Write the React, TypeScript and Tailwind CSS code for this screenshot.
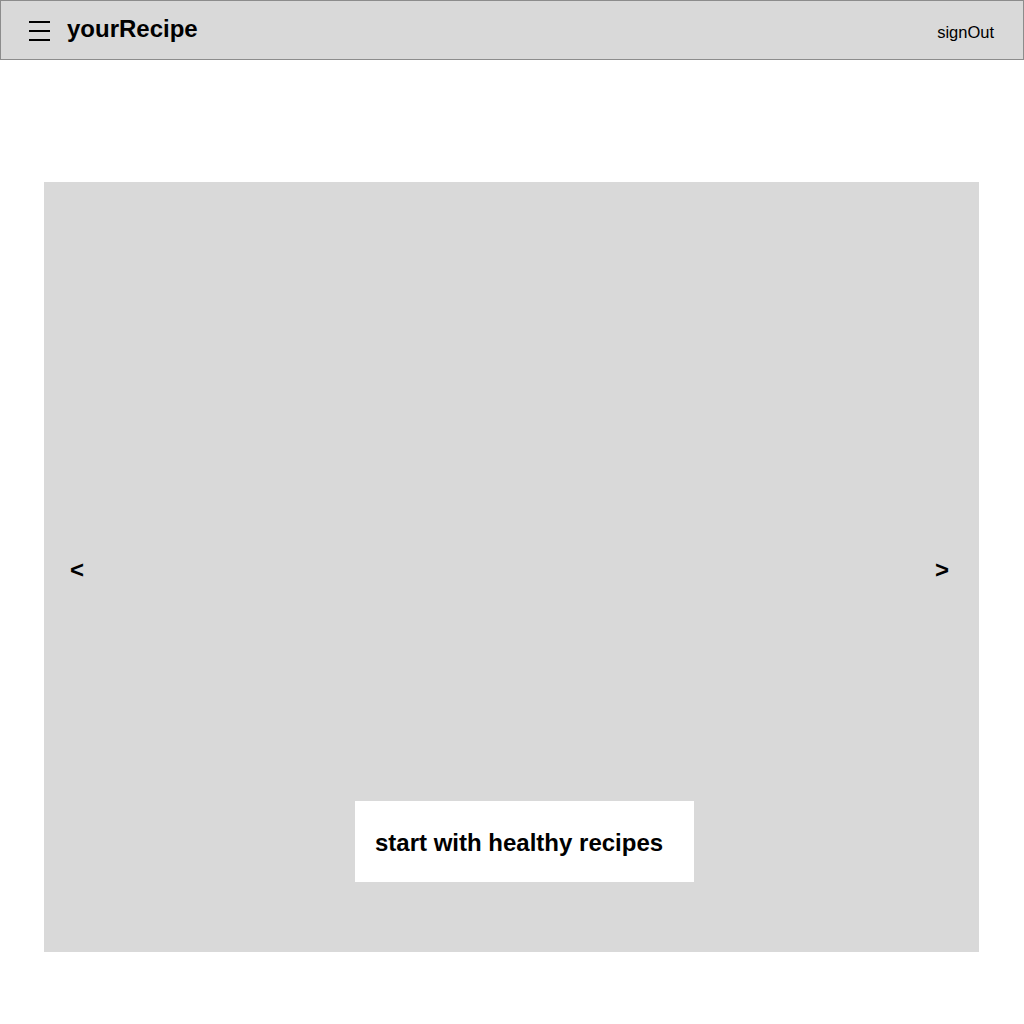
const App = () => {
  return (
    <div className="min-h-[1024px] bg-white text-black font-['Liberation_Sans',Arial,sans-serif]">
      {/* Header */}
      <header className="h-[60px] bg-[#d9d9d9] border border-[#8c8c8c] flex items-center pl-[28px] pr-[29px]">
        <button className="flex flex-col gap-[7px] w-[21px] mr-[17px] mt-[1px]">
          <span className="block h-[2px] w-full bg-black" />
          <span className="block h-[2px] w-full bg-black" />
          <span className="block h-[2px] w-full bg-black" />
        </button>
        <h1 className="text-[24px] font-bold leading-none -mt-[2px]">yourRecipe</h1>
        <button className="ml-auto text-[16.5px] leading-none mt-[4px]">signOut</button>
      </header>

      {/* Carousel */}
      <main className="pt-[122px] pl-[44px] pr-[45px]">
        <div className="relative h-[770px] bg-[#d9d9d9] flex items-center justify-between pl-[26px] pr-[30px]">
          <button className="text-[24px] font-bold leading-none mt-[5px]">&lt;</button>
          <button className="text-[24px] font-bold leading-none mt-[5px]">&gt;</button>
          <div className="absolute left-[311px] bottom-[70px] w-[339px] h-[81px] bg-white flex items-center pl-[20px]">
            <p className="text-[24px] font-bold leading-none mt-[3px]">start with healthy recipes</p>
          </div>
        </div>
      </main>
    </div>
  );
};

export default App;
